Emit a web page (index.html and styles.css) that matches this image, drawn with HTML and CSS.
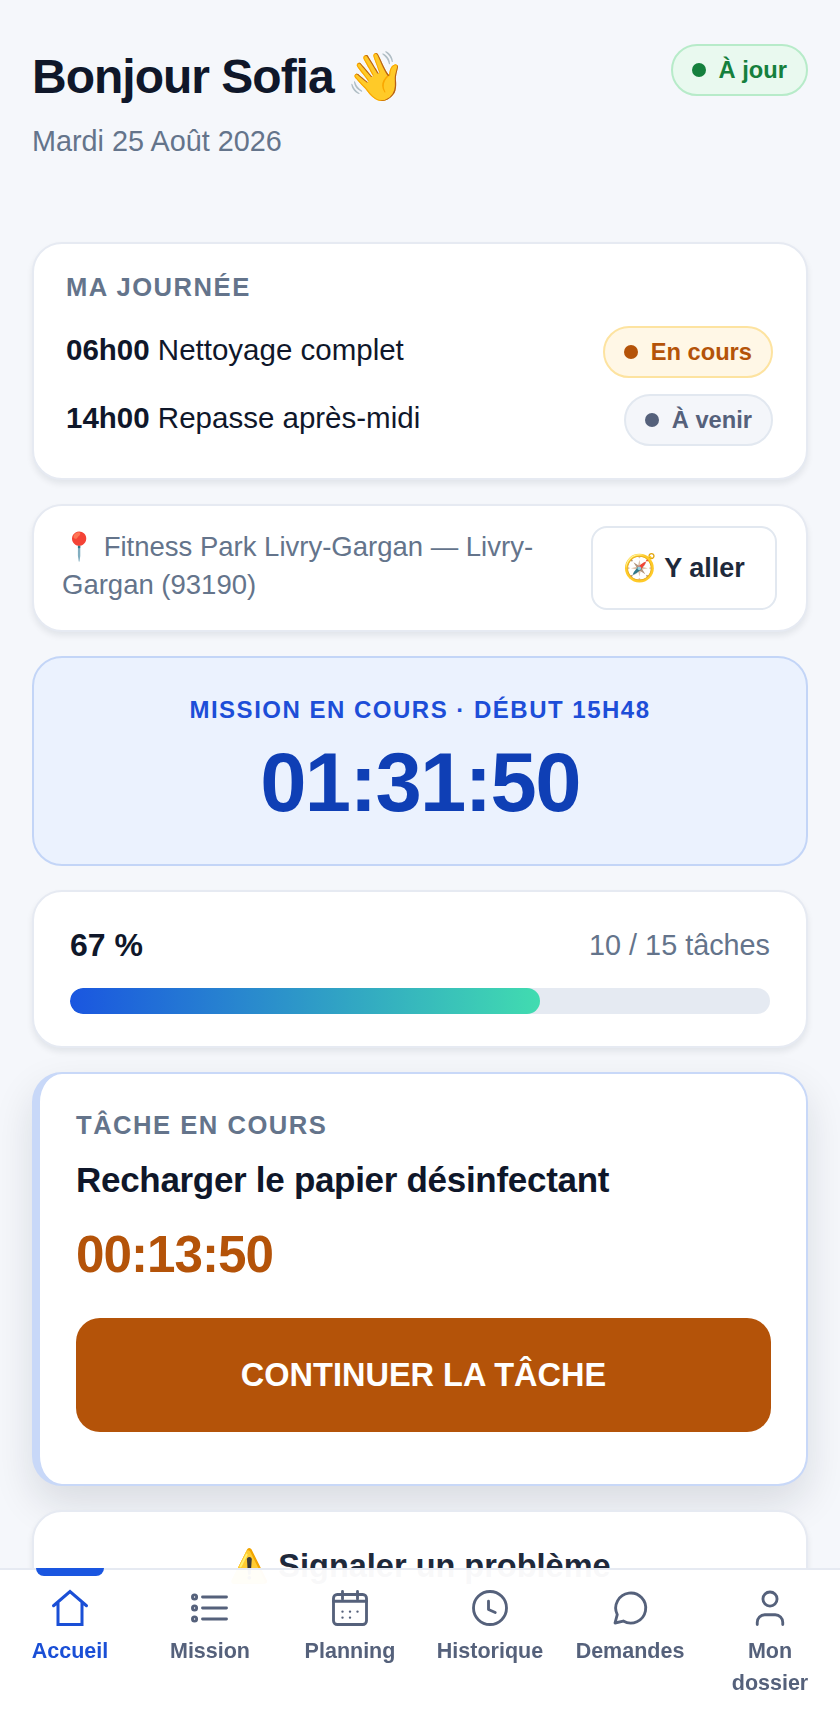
FILE: index.html
```html
<!DOCTYPE html>
<html lang="fr">
<head>
    <meta charset="UTF-8">
    <meta name="viewport" content="width=device-width, initial-scale=1.0">
    <title>Accueil</title>
    <link rel="stylesheet" href="styles.css">
</head>
<body>
    <main class="page">
        <header class="top">
            <div>
                <h1>Bonjour Sofia 👋</h1>
                <p class="date">Mardi 25 Août 2026</p>
            </div>
            <span class="badge badge-vert"><i></i>À jour</span>
        </header>

        <section class="carte journee">
            <h2 class="label">MA JOURNÉE</h2>
            <div class="ligne">
                <span class="ligne-texte"><b>06h00</b> Nettoyage complet</span>
                <span class="badge badge-orange"><i></i>En cours</span>
            </div>
            <div class="ligne">
                <span class="ligne-texte"><b>14h00</b> Repasse après-midi</span>
                <span class="badge badge-gris"><i></i>À venir</span>
            </div>
        </section>

        <section class="carte lieu">
            <p>📍 Fitness Park Livry-Gargan — Livry-Gargan (93190)</p>
            <a class="aller">🧭 Y aller</a>
        </section>

        <section class="chrono">
            <p>MISSION EN COURS · DÉBUT 15H48</p>
            <div class="temps">01:31:50</div>
        </section>

        <section class="carte progres">
            <div class="progres-haut">
                <b>67 %</b>
                <span>10 / 15 tâches</span>
            </div>
            <div class="barre"><div class="barre-pleine" style="width: 67.2%"></div></div>
        </section>

        <section class="tache">
            <h2 class="label">TÂCHE EN COURS</h2>
            <h3>Recharger le papier désinfectant</h3>
            <div class="tache-temps">00:13:50</div>
            <a class="continuer">CONTINUER LA TÂCHE</a>
        </section>

        <section class="carte signaler">⚠️ Signaler un problème</section>
    </main>

    <nav class="menu">
        <a class="menu-item actif">
            <svg class="maison" viewBox="0 0 24 24"><path d="M1 10.500 12 1l11 9.500M4 8v15h16V8"/></svg>
            Accueil
        </a>
        <a class="menu-item">
            <svg viewBox="0 0 24 24"><path d="M7 4.670h16M7 12h16M7 19.330h16"/><circle cx="1.700" cy="4.670" r="1.400"/><circle cx="1.700" cy="12" r="1.400"/><circle cx="1.700" cy="19.330" r="1.400"/></svg>
            Mission
        </a>
        <a class="menu-item">
            <svg viewBox="0 0 24 24"><rect x="1" y="3" width="22" height="20" rx="2.500"/><path d="M1 7.500h22M7 1v5M17 1v5"/><path class="points" d="M7 14.400h.01M12 14.400h.01M17 14.400h.01M7 18.400h.01M12 18.400h.01"/></svg>
            Planning
        </a>
        <a class="menu-item">
            <svg viewBox="0 0 24 24"><circle cx="12" cy="12" r="11"/><path d="M11 7.500v5.500l4.500 2"/></svg>
            Historique
        </a>
        <a class="menu-item">
            <svg viewBox="0 0 24 24"><path d="M2 22l1.500-5.600A10 10 0 1 1 7.500 20.700z"/></svg>
            Demandes
        </a>
        <a class="menu-item">
            <svg viewBox="0 0 24 24"><circle cx="12" cy="6" r="4.700"/><path d="M3.500 23v-1.500a5 5 0 0 1 5-5h7a5 5 0 0 1 5 5V23"/></svg>
            Mon dossier
        </a>
    </nav>
</body>
</html>
```

FILE: styles.css
```css
*{
    box-sizing: border-box;
}

html, body{
    margin: 0;
    height: 100%;
    overflow: hidden;
}

body{
    font-family: "Liberation Sans", Arial, sans-serif;
    background-color: #f5f7fb;
    color: #0f172a;
}

.page{
    padding: 44px 32px 0;
    display: flex;
    flex-direction: column;
    gap: 24px;
}

.top{
    display: flex;
    justify-content: space-between;
    align-items: flex-start;
    height: 174px;
}

h1{
    font-size: 48px;
    line-height: 66px;
    letter-spacing: -1px;
    margin: 0;
}

.date{
    font-size: 28.8px;
    line-height: 36px;
    color: #64748b;
    margin: 13px 0 0;
}

.badge{
    display: inline-flex;
    align-items: center;
    gap: 13px;
    height: 52px;
    padding: 0 19px;
    border: 2px solid;
    border-radius: 26px;
    font-size: 23.7px;
    font-weight: bold;
    white-space: nowrap;
}

.badge i{
    width: 14px;
    height: 14px;
    border-radius: 50%;
    background-color: currentColor;
}

.badge-vert{
    color: #15803d;
    background-color: #e9f9ef;
    border-color: #b7ebc9;
}

.badge-orange{
    color: #b45309;
    background-color: #fff7e6;
    border-color: #fde3a0;
}

.badge-gris{
    color: #55617b;
    background-color: #f4f6fa;
    border-color: #e2e8f0;
}

.carte{
    background-color: #fff;
    border: 2px solid #e6eaf2;
    border-radius: 30px;
    box-shadow: 0 4px 6px rgba(15,23,42,.08);
}

.label{
    font-size: 25.6px;
    line-height: 32px;
    font-weight: bold;
    letter-spacing: 1.5px;
    color: #64748b;
    margin: 0;
}

.journee{
    height: 238px;
    padding: 27px 33px 0 32px;
}

.ligne{
    display: flex;
    justify-content: space-between;
    align-items: center;
    font-size: 29.5px;
    height: 52px;
    margin-top: 16px;
}

.journee .label + .ligne{
    margin-top: 23px;
}

.ligne-texte{
    margin-bottom: 4px;
}

.lieu{
    display: flex;
    align-items: center;
    justify-content: space-between;
    height: 128px;
    padding: 0 29px 0 28px;
}

.lieu p{
    font-size: 27.5px;
    line-height: 38px;
    color: #64748b;
    margin: 0 0 4px;
    width: 490px;
}

.aller{
    display: flex;
    align-items: center;
    justify-content: center;
    width: 186px;
    height: 84px;
    border: 2px solid #e2e8f0;
    border-radius: 16px;
    font-size: 27px;
    font-weight: bold;
    color: #1e293b;
}

.chrono{
    height: 210px;
    background-color: #ebf2fe;
    border: 2px solid #c3d5f7;
    border-radius: 30px;
    text-align: center;
    padding-top: 37px;
}

.chrono p{
    font-size: 24px;
    line-height: 30px;
    font-weight: bold;
    letter-spacing: 1.5px;
    color: #1d4ed8;
    margin: 0;
}

.temps{
    font-size: 83.2px;
    line-height: 100px;
    font-weight: bold;
    letter-spacing: -1.7px;
    color: #0f3fb5;
    margin-top: 8px;
}

.progres{
    height: 158px;
    padding: 33px 36px 0;
}

.progres-haut{
    display: flex;
    justify-content: space-between;
    align-items: center;
    font-size: 28.8px;
    line-height: 40px;
    color: #64748b;
}

.progres-haut b{
    font-size: 32px;
    color: #0f172a;
}

.barre{
    height: 26px;
    background-color: #e5eaf2;
    border-radius: 13px;
    margin-top: 23px;
    overflow: hidden;
}

.barre-pleine{
    height: 100%;
    border-radius: 13px;
    background: linear-gradient(90deg, #1a56e0, #41dcb0);
}

.tache{
    height: 414px;
    background-color: #fff;
    border: 2px solid #c8d8f8;
    border-left-width: 8px;
    border-radius: 30px;
    box-shadow: 0 18px 40px rgba(15,23,42,.12);
    padding: 35px 35px 0 36px;
}

.tache h3{
    font-size: 35px;
    line-height: 44px;
    letter-spacing: -.3px;
    margin: 17px 0 0;
}

.tache-temps{
    font-size: 51.2px;
    line-height: 60px;
    font-weight: bold;
    letter-spacing: -1px;
    color: #b45309;
    margin-top: 23px;
}

.continuer{
    display: flex;
    align-items: center;
    justify-content: center;
    height: 114px;
    margin-top: 33px;
    background-color: #b45309;
    border-radius: 24px;
    color: #fff;
    font-size: 32.5px;
    font-weight: bold;
}

.signaler{
    height: 110px;
    padding-top: 35px;
    text-align: center;
    font-size: 32.5px;
    font-weight: bold;
    color: #1e293b;
}

.menu{
    position: fixed;
    left: 0;
    right: 0;
    bottom: 0;
    height: 152px;
    display: grid;
    grid-template-columns: repeat(6, minmax(0, 1fr));
    background-color: rgba(255,255,255,.97);
    border-top: 2px solid #e6eaf2;
}

.menu-item{
    position: relative;
    display: flex;
    flex-direction: column;
    align-items: center;
    padding: 20px 12px 0;
    font-size: 21.5px;
    line-height: 32px;
    font-weight: bold;
    text-align: center;
    color: #55617b;
}

.menu-item svg{
    width: 36px;
    height: 36px;
    margin-bottom: 9px;
    fill: none;
    stroke: currentColor;
    stroke-width: 1.9;
    stroke-linecap: round;
    stroke-linejoin: round;
    overflow: visible;
    flex: none;
}

.menu-item .maison{
    stroke-linejoin: miter;
    stroke-width: 2;
}

.menu-item .points{
    stroke-width: 1.6;
}

.actif{
    color: #1a4fd6;
}

.actif::before{
    content: "";
    position: absolute;
    top: -2px;
    left: 36px;
    width: 68px;
    height: 8px;
    background-color: #1a56e0;
    border-radius: 0 0 8px 8px;
}
```
